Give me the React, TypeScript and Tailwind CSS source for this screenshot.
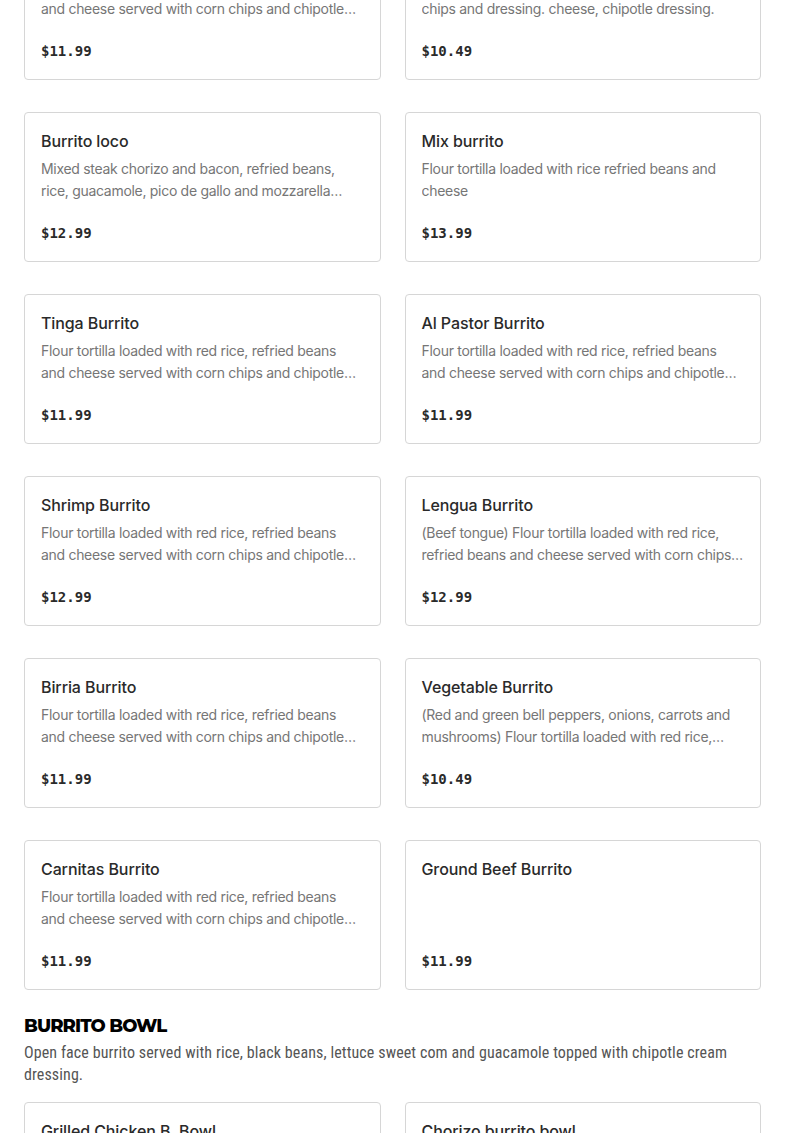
import React from "react";

type Item = { name: string; desc?: string; price: string };

const FT = "Flour tortilla loaded with red rice, refried beans and cheese served with corn chips and chipotle dressing.";

const rows: Item[][] = [
  [
    { name: "Chicken Burrito", desc: FT, price: "$11.99" },
    { name: "Veggie Burrito", desc: "Flour tortilla loaded with rice, black beans, corn chips and dressing. cheese, chipotle dressing.", price: "$10.49" },
  ],
  [
    { name: "Burrito loco", desc: "Mixed steak chorizo and bacon, refried beans, rice, guacamole, pico de gallo and mozzarella cheese served with chips.", price: "$12.99" },
    { name: "Mix burrito", desc: "Flour tortilla loaded with rice refried beans and cheese", price: "$13.99" },
  ],
  [
    { name: "Tinga Burrito", desc: FT, price: "$11.99" },
    { name: "Al Pastor Burrito", desc: FT, price: "$11.99" },
  ],
  [
    { name: "Shrimp Burrito", desc: FT, price: "$12.99" },
    { name: "Lengua Burrito", desc: "(Beef tongue) Flour tortilla loaded with red rice, refried beans and cheese served with corn chips and chipotle dressing.", price: "$12.99" },
  ],
  [
    { name: "Birria Burrito", desc: FT, price: "$11.99" },
    { name: "Vegetable Burrito", desc: "(Red and green bell peppers, onions, carrots and mushrooms) Flour tortilla loaded with red rice, refried beans and cheese.", price: "$10.49" },
  ],
  [
    { name: "Carnitas Burrito", desc: FT, price: "$11.99" },
    { name: "Ground Beef Burrito", price: "$11.99" },
  ],
];

const sans = { fontFamily: "Inter, 'Noto Sans', sans-serif" };

function Card({ item }: { item: Item }) {
  return (
    <div className="border border-[#d6d6d6] rounded-[4px] bg-white px-4 pt-4 pb-4 h-[150px] flex flex-col">
      <div className="text-[16px] leading-[24px] font-medium text-[#2a2a2a] tracking-[-0.1px]" style={sans}>
        {item.name}
      </div>
      <div
        className="mt-[5px] text-[14px] leading-[22px] text-[#767676] tracking-[-0.3px] line-clamp-2 h-[44px]"
        style={sans}
      >
        {item.desc ?? ""}
      </div>
      <div
        className="mt-[19px] text-[14px] leading-[24px] font-bold text-[#2a2a2a]"
        style={{ fontFamily: "'DejaVu Sans Mono', 'Liberation Mono', monospace" }}
      >
        {item.price}
      </div>
    </div>
  );
}

export default function App() {
  return (
    <div className="bg-white w-[785px] h-[1133px] overflow-hidden">
      <div className="px-6 mt-[-70px]">
        <div className="flex flex-col gap-8">
          {rows.map((r, i) => (
            <div key={i} className="grid grid-cols-2 gap-6">
              {r.map((it) => (
                <Card key={it.name} item={it} />
              ))}
            </div>
          ))}
        </div>
        <div className="mt-[25px]">
          <h2
            className="text-[18px] leading-[22px] font-extrabold text-black tracking-[-0.9px]"
            style={{ fontFamily: "Montserrat, Inter, sans-serif" }}
          >
            BURRITO BOWL
          </h2>
          <p
            className="mt-[5px] text-[16px] leading-[22px] text-[#555555] tracking-[0.1px]"
            style={{ fontFamily: "'Liberation Sans Narrow', 'Roboto Condensed', 'Noto Sans', sans-serif" }}
          >
            Open face burrito served with rice, black beans, lettuce sweet com and guacamole topped with chipotle cream
            dressing.
          </p>
        </div>
        <div className="grid grid-cols-2 gap-6 mt-[16px]">
          <Card item={{ name: "Grilled Chicken B. Bowl", desc: "Grilled chicken, rice, black beans.", price: "$12.99" }} />
          <Card item={{ name: "Chorizo burrito bowl", desc: "Chorizo, rice, black beans.", price: "$12.99" }} />
        </div>
      </div>
    </div>
  );
}
